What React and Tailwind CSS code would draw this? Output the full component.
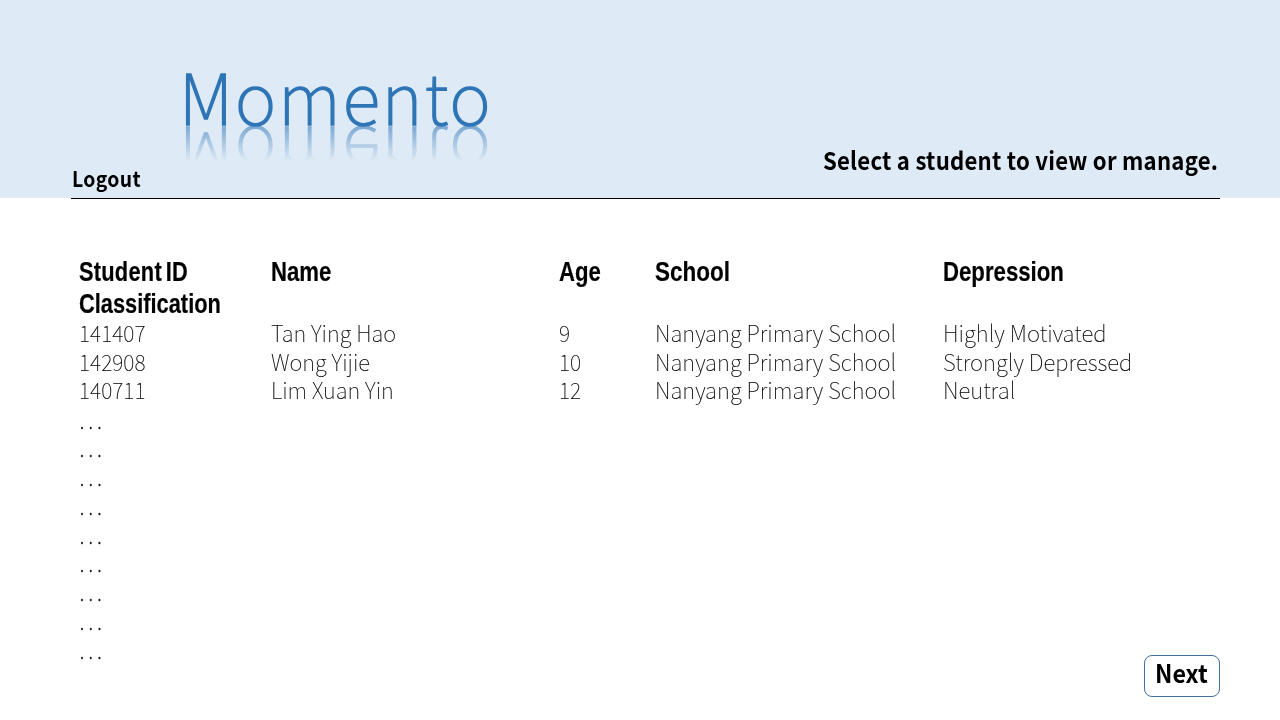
const students = [
  { id: '141407', name: 'Tan Ying Hao', age: '9', school: 'Nanyang Primary School', state: 'Highly Motivated' },
  { id: '142908', name: 'Wong Yijie', age: '10', school: 'Nanyang Primary School', state: 'Strongly Depressed' },
  { id: '140711', name: 'Lim Xuan Yin', age: '12', school: 'Nanyang Primary School', state: 'Neutral' },
];

const columns = 'grid grid-cols-[192px_288px_96px_288px_1fr]';
const title =
  'h-[70px] whitespace-nowrap text-[70px] leading-[78px] font-thin tracking-[2.2px] text-[#2e75b6] [-webkit-text-stroke:1.5px_#2e75b6]';
const emptyRows = Array.from({ length: 9 });

export default function App() {
  return (
    <div className="flex h-[720px] w-[1280px] flex-col overflow-hidden bg-white font-['Noto_Sans_CJK_KR',sans-serif] text-black">
      <header className="flex h-[198px] shrink-0 flex-col bg-[#deeaf6]">
        <div className="ml-[179px] h-[166px] w-[340px] pt-[56px]">
          <h1 className={title}>Momento</h1>
          <div aria-hidden="true" className="h-[36px] overflow-hidden [mask-image:linear-gradient(to_bottom,rgba(0,0,0,0.56),transparent_35px)]">
            <div className={title + ' -scale-y-100'}>Momento</div>
          </div>
        </div>
        <div className="mr-[62px] ml-[71.5px] flex h-[32px] items-start justify-between">
          <button className="-mt-[2px] h-[28px] origin-left scale-x-[0.9] text-[21.5px] leading-[26px] font-bold tracking-[0.4px] whitespace-nowrap">Logout</button>
          <p className="-mt-[24px] origin-right scale-x-[0.904] text-[24.5px] leading-[36px] font-bold tracking-[0.25px] whitespace-nowrap">Select a student to view or manage.</p>
        </div>
      </header>
      <div className="mr-[60px] ml-[71px] h-px shrink-0 bg-black" />
      <main className="ml-[79px] w-[1141px] grow pt-[57px]">
        <div className={columns + " h-[64px] font-['Liberation_Sans',sans-serif] text-[27px] leading-[32px] font-bold [-webkit-text-stroke:0.2px_black]"}>
          <div className="origin-left scale-x-[0.808] whitespace-nowrap [word-spacing:-3px]"><span className="tracking-[0.3px]">Student ID</span><br />Classification</div>
          <div className="origin-left scale-x-[0.82]">Name</div>
          <div className="origin-left scale-x-[0.82]">Age</div>
          <div className="origin-left scale-x-[0.833]">School</div>
          <div className="origin-left scale-x-[0.822]">Depression</div>
        </div>
        <div className="-mt-[2px] text-[23px] leading-[28.5px] font-thin [-webkit-text-stroke:0.1px_black]">
          {students.map((s) => (
            <div key={s.id} className={columns + ' whitespace-nowrap'}>
              <span className="origin-left scale-x-[0.925]">{s.id}</span>
              <span className="origin-left scale-x-[0.955]">{s.name}</span>
              <span className="origin-left scale-x-[0.925]">{s.age}</span>
              <span className="origin-left scale-x-[0.965]">{s.school}</span>
              <span className="origin-left scale-x-[0.97]">{s.state}</span>
            </div>
          ))}
          <div className="pt-px">
            {emptyRows.map((_, i) => (
              <div key={i} className="h-[28.75px] origin-left scale-x-[0.84] pl-px leading-[28.75px] [-webkit-text-stroke:0.4px_black]">. . .</div>
            ))}
          </div>
        </div>
      </main>
      <footer className="absolute top-[655px] left-[1144px]">
        <button className="flex h-[42px] w-[76px] justify-center rounded-[8px] border border-[#41719c] bg-white pr-[2px] text-[25px] leading-[33px] font-bold">
          <span className="scale-x-[0.93]">Next</span>
        </button>
      </footer>
    </div>
  );
}
